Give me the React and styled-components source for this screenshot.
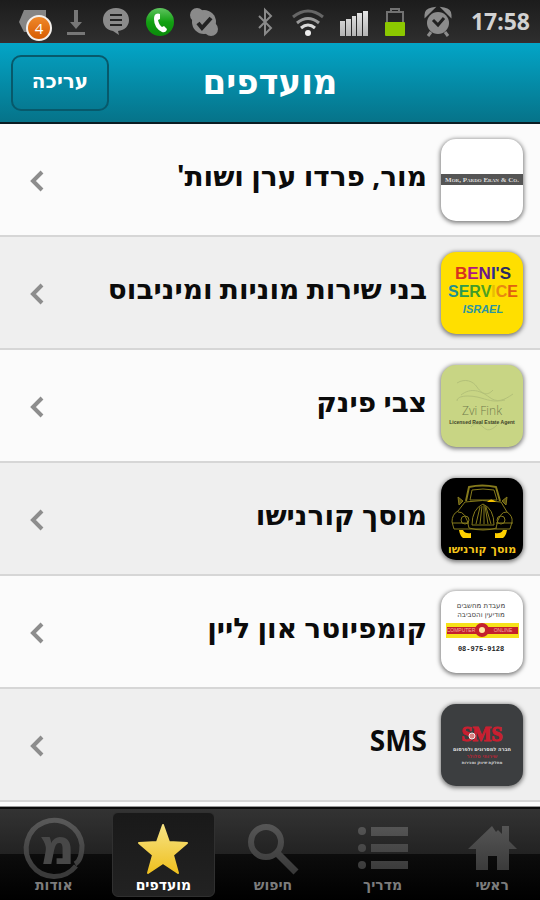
import React, { useState } from "react";
import styled, { createGlobalStyle } from "styled-components";

const rows = [
  { id: "mor", title: "מור, פרדו ערן ושות'", Logo: MorLogo, bg: "#ffffff" },
  { id: "beni", title: "בני שירות מוניות ומיניבוס", Logo: BeniLogo, bg: "#ffdf00" },
  { id: "zvi", title: "צבי פינק", Logo: ZviLogo, bg: "#c8d584" },
  { id: "garage", title: "מוסך קורנישו", Logo: GarageLogo, bg: "#000000" },
  { id: "online", title: "קומפיוטר און ליין", Logo: OnlineLogo, bg: "#ffffff" },
  { id: "sms", title: "SMS", Logo: SmsLogo, bg: "#3c3e40" },
];

const tabs = [
  { id: "home", title: "ראשי", Icon: HomeIcon },
  { id: "guide", title: "מדריך", Icon: ListIcon },
  { id: "search", title: "חיפוש", Icon: SearchIcon },
  { id: "favorites", title: "מועדפים", Icon: StarIcon },
  { id: "about", title: "אודות", Icon: AboutIcon },
];

function MorLogo() {
  return (
    <svg viewBox="0 0 82 82" direction="ltr">
      <rect y="35" width="82" height="11" fill="#555" />
      <text x="41" y="43" textAnchor="middle" fontSize="7" fontWeight="bold" fill="#ddd" fontFamily="Liberation Serif, serif" fontVariant="small-caps">
        Mor, Pardo Eran & Co.
      </text>
    </svg>
  );
}

function BeniLogo() {
  return (
    <svg viewBox="0 0 82 82" fontFamily="Liberation Sans, sans-serif" fontWeight="bold" textAnchor="middle">
      <text x="42" y="27" fontSize="17">
        <tspan fill="#d8341c">B</tspan>
        <tspan fill="#b01880">E</tspan>
        <tspan fill="#6a1a8c">N</tspan>
        <tspan fill="#2c2c90">I'</tspan>
        <tspan fill="#2a2a60">S</tspan>
      </text>
      <text x="42" y="45" fontSize="16">
        <tspan fill="#1f8f8f">S</tspan>
        <tspan fill="#2b9a50">E</tspan>
        <tspan fill="#3f9a28">R</tspan>
        <tspan fill="#4fa020">V</tspan>
        <tspan fill="#e8c000">I</tspan>
        <tspan fill="#e88a10">C</tspan>
        <tspan fill="#e06010">E</tspan>
      </text>
      <text x="42" y="61" fontSize="11" fontStyle="italic" fill="#2a95a0">
        ISRAEL
      </text>
    </svg>
  );
}

function ZviLogo() {
  return (
    <svg viewBox="0 0 82 82">
      <g fill="none" stroke="#b3c079" strokeWidth="1">
        <path d="M16 18c8-5 16-2 20 4s10 10 16 3" />
        <path d="M20 30c10-8 20-4 28 2s14 4 24-3" />
        <path d="M16 36c0-6 14-6 24-3s14 4 24 2" />
        <path d="M30 62c4-5 8-4 12 0s8 4 14-2" />
      </g>
      <text x="41" y="50" textAnchor="middle" fontSize="12" fill="#727c4c" fontFamily="Open Sans, sans-serif" fontWeight="300">
        Zvi Fink
      </text>
      <text x="41" y="59" textAnchor="middle" fontSize="5" fontWeight="bold" fill="#3c4228" fontFamily="Liberation Sans, sans-serif">
        Licensed Real Estate Agent
      </text>
    </svg>
  );
}

function GarageLogo() {
  return (
    <svg viewBox="0 0 82 82">
      <g fill="none" stroke="#857a1c" strokeWidth="1">
        <path d="M25 23l3-14q13-3 27 0l4 14" strokeWidth="2" />
        <path d="M29 22l2-10q11-2 22 0l3 10z" />
        <path d="M24 24q17-3 36 0l6 10q6 4 5 10l-2 7H13l-2-7q0-8 6-11z" />
        <path d="M31 47q0-16 11-21q11 5 11 21z" />
        <path d="M35 46l4-17M39 46l2-18M43 46V27M47 46l-3-18M50 46l-5-17" />
        <path d="M17 34q8-1 11 16M66 34q-8-1-11 16M11 45h17M55 45h17M28 50q14 4 28 0" />
        <circle cx="24" cy="42" r="4" />
        <circle cx="60" cy="42" r="4" />
        <path d="M17 19l5 4-4 4zM66 19l-5 4 4 4z" fill="#5a5010" />
      </g>
      <path d="M46 24q4-5 9 0z" fill="#f5c000" />
      <path d="M18 52h4q2 4 8 3v5h-8q-3-2-4-8zM66 52h-4q-2 4-8 3v5h8q3-2 4-8z" fill="#ffd000" />
      <text x="41" y="75" textAnchor="middle" fontSize="11" fontWeight="bold" fill="#f5c61a" fontFamily="DejaVu Sans, sans-serif">
        מוסך קורנישו
      </text>
    </svg>
  );
}

function OnlineLogo() {
  return (
    <svg viewBox="0 0 82 82" textAnchor="middle">
      <g fontFamily="DejaVu Sans, sans-serif" fontSize="7" fill="#444">
        <text x="40" y="17">מעבדת מחשבים</text>
        <text x="40" y="26">מודיעין והסביבה</text>
      </g>
      <rect x="5" y="32" width="73" height="15" fill="#f6e21a" />
      <rect x="6" y="36" width="71" height="7" fill="#c4202c" />
      <circle cx="41" cy="39" r="5" fill="#ffe9a0" stroke="#c4202c" strokeWidth="4" />
      <text x="20" y="41" fontSize="5" fill="#f3b0a0" fontFamily="Liberation Sans, sans-serif">COMPUTER</text>
      <text x="62" y="41" fontSize="5" fill="#f3b0a0" fontFamily="Liberation Sans, sans-serif">ONLINE</text>
      <text x="40" y="60" fontSize="7" fontWeight="bold" fill="#222" fontFamily="Liberation Mono, monospace">
        08-975-9128
      </text>
    </svg>
  );
}

function SmsLogo() {
  return (
    <svg viewBox="0 0 82 82" textAnchor="middle">
      <text x="41" y="37" fontSize="20" fontWeight="bold" fill="#c91f30" stroke="#c91f30" strokeWidth="1" fontFamily="Liberation Serif, serif">
        SMS
      </text>
      <circle cx="31" cy="32" r="3" fill="#d88080" stroke="#eee" strokeWidth="1" />
      <g fontFamily="DejaVu Sans, sans-serif" fontWeight="bold">
        <text x="41" y="47" fontSize="5" fill="#e4e4e4">חברה למסרונים ולפרסום</text>
        <text x="41" y="54" fontSize="5" fill="#b02838">שירותי סלולר</text>
        <text x="41" y="60" fontSize="4" fill="#cfcfcf">מחלקת שיווק ומכירות</text>
      </g>
    </svg>
  );
}

function HomeIcon() {
  return (
    <svg viewBox="0 0 64 64" fill="url(#tabGray)">
      <path d="M32 13L8 36h8v21h12V43h9v14h12V36h8L49 28V13h-7v8l-4-4-2 2z" />
    </svg>
  );
}

function ListIcon() {
  return (
    <svg viewBox="0 0 64 64" fill="url(#tabGray)">
      <circle cx="11" cy="18" r="4" />
      <circle cx="11" cy="35" r="4" />
      <circle cx="11" cy="52" r="4" />
      <path d="M20 14h37v9H20zM20 31h37v8H20zM20 48h37v8H20z" />
    </svg>
  );
}

function SearchIcon() {
  return (
    <svg viewBox="0 0 64 64" fill="none" stroke="url(#tabGray)">
      <circle cx="25" cy="29" r="15" strokeWidth="6" />
      <path d="M36 40l19 19" strokeWidth="7" />
    </svg>
  );
}

function StarIcon() {
  return (
    <svg viewBox="0 0 64 64">
      <path
        d="M32 12l6 17 18 1-14 12 5 18-15-10-15 10 5-18L8 30l18-1z"
        fill="url(#starGold)"
        stroke="url(#starGold)"
        strokeWidth="2"
        strokeLinejoin="round"
      />
    </svg>
  );
}

function AboutIcon() {
  return (
    <svg viewBox="0 0 64 64">
      <path d="M54 53A28 28 0 1 1 60 32q0 15-7 19" fill="none" stroke="url(#tabGray)" strokeWidth="5" />
      <text x="35" y="51" textAnchor="middle" fontSize="50" fontWeight="bold" fill="#484848" fontFamily="DejaVu Sans, sans-serif">
        מ
      </text>
    </svg>
  );
}

const Gradients = () => (
  <HiddenSvg aria-hidden="true">
    <linearGradient id="tabGray" gradientUnits="userSpaceOnUse" x1="0" y1="8" x2="0" y2="58">
      <stop offset="0" stopColor="#585858" />
      <stop offset="1" stopColor="#3a3a3a" />
    </linearGradient>
    <linearGradient id="starGold" x1="0" y1="0" x2="0" y2="1">
      <stop offset="0" stopColor="#f7e384" />
      <stop offset="1" stopColor="#efc01f" />
    </linearGradient>
    <linearGradient id="badgeOrange" x1="0" y1="0" x2="0" y2="1">
      <stop offset="0" stopColor="#f08a2c" />
      <stop offset="1" stopColor="#d65a00" />
    </linearGradient>
    <linearGradient id="callGreen" x1="0" y1="0" x2="0" y2="1">
      <stop offset="0" stopColor="#5fc45f" />
      <stop offset="0.5" stopColor="#12a012" />
      <stop offset="1" stopColor="#0a8a0a" />
    </linearGradient>
    <linearGradient id="signalGray" x1="0" y1="0" x2="0" y2="1">
      <stop offset="0" stopColor="#e6e6e6" />
      <stop offset="1" stopColor="#b4b4b4" />
    </linearGradient>
  </HiddenSvg>
);

const StatusIcons = () => (
  <>
    <StatusGroup>
      <svg width="34" height="36" viewBox="0 0 34 36">
        <path d="M8 7h22v14l-6 8H8L3 19z" fill="#858585" />
        <circle cx="23" cy="25" r="12" fill="url(#badgeOrange)" stroke="#f4f0ec" strokeWidth="2" />
        <text x="23" y="31" textAnchor="middle" fontSize="15" fill="#fff" fontFamily="Open Sans, sans-serif">
          4
        </text>
      </svg>
      <svg width="20" height="36" viewBox="0 0 20 36">
        <path d="M8 7h4v12h4l-6 7-6-7h4zM1 29h18v3H1z" fill="#777" />
      </svg>
      <svg width="28" height="36" viewBox="0 0 28 36">
        <path d="M14 5C6 5 1 10 1 17c0 6 4 10 10 11l6 4-1-4c7-1 11-5 11-11C27 10 22 5 14 5z" fill="#8a8a8a" />
        <path d="M8 12h12M8 17h12M8 22h12" stroke="#222" strokeWidth="2" />
      </svg>
      <svg width="28" height="36" viewBox="0 0 28 36">
        <circle cx="14" cy="19" r="14" fill="url(#callGreen)" />
        <path d="M10 11q2-1 4 0l0 5-2 1q1 5 4 7l2-1 3 3q-1 4-5 3Q8 25 8 16q0-4 2-5z" fill="#fff" />
      </svg>
      <svg width="28" height="36" viewBox="1 0 28 36">
        <circle cx="15" cy="19" r="12" fill="#8a8a8a" />
        <circle cx="8" cy="12" r="7" fill="#8a8a8a" />
        <circle cx="22" cy="26" r="7" fill="#8a8a8a" />
        <path d="M9 20l4 5 9-10" fill="none" stroke="#222" strokeWidth="4" />
      </svg>
    </StatusGroup>
    <StatusGroup>
      <svg width="16" height="36" viewBox="0 0 16 36">
        <path d="M2 13l12 12-6 6V7l6 6L2 25" fill="none" stroke="#8a8a8a" strokeWidth="2" />
      </svg>
      <svg width="32" height="36" viewBox="-1 0 32 36">
        <g fill="none" strokeWidth="3">
          <path d="M1 14q15-12 30 0" stroke="#666" />
          <path d="M5 20q11-9 22 0" stroke="#999" />
          <path d="M9 25q7-6 14 0" stroke="#d8d8d8" />
        </g>
        <circle cx="16" cy="30" r="3" fill="#eee" />
      </svg>
      <svg width="28" height="36" viewBox="1 0 28 36">
        <path d="M0 18h5v15H0zM6 16h5v17H6zM12 13h4v20h-4zM17 10h5v23h-5zM23 8h5v25h-5z" fill="url(#signalGray)" />
      </svg>
      <svg width="20" height="36" viewBox="2 0 20 36">
        <path d="M6 8V6h8v2M2 32V9h16v23z" fill="none" stroke="#727272" strokeWidth="2" />
        <rect y="19" width="20" height="14" rx="1" fill="#8cc800" />
      </svg>
      <svg width="28" height="36" viewBox="1 0 28 36">
        <circle cx="14" cy="20" r="11" fill="#8c8c8c" />
        <path d="M2 12q0-5 6-6zM26 12q0-5-6-6zM7 29l-3 4M21 29l3 4" fill="#8c8c8c" stroke="#8c8c8c" strokeWidth="3" />
        <path d="M9 17l5 5 6-7" fill="none" stroke="#222" strokeWidth="3" />
      </svg>
      <Clock>17:58</Clock>
    </StatusGroup>
  </>
);

const App = () => {
  const [activeTab, setActiveTab] = useState("favorites");

  return (
    <>
      <GlobalStyle />
      <Gradients />
      <Screen dir="rtl" lang="he">
        <StatusBar dir="ltr">
          <StatusIcons />
        </StatusBar>

        <Header dir="ltr">
          <EditButton type="button">עריכה</EditButton>
          <Title>מועדפים</Title>
        </Header>

        <List>
          {rows.map(({ id, title, Logo, bg }) => (
            <Row key={id}>
              <RowLink href={`#${id}`}>
                <Tile $bg={bg}>
                  <Logo />
                </Tile>
                <RowTitle>{title}</RowTitle>
                <Chevron viewBox="0 0 14 22" aria-hidden="true">
                  <path d="M12 3L3 12l9 9" />
                </Chevron>
              </RowLink>
            </Row>
          ))}
        </List>

        <TabBar>
          {tabs.map(({ id, title, Icon }) => (
            <Tab
              key={id}
              href={`#${id}`}
              $active={id === activeTab}
              onClick={() => setActiveTab(id)}
            >
              <Icon />
              <span>{title}</span>
            </Tab>
          ))}
        </TabBar>
      </Screen>
    </>
  );
};

export default App;

const GlobalStyle = createGlobalStyle`
  * {
    box-sizing: border-box;
  }
  body {
    margin: 0;
    background: #fbfbfb;
    font-family: "Noto Sans", "DejaVu Sans", sans-serif;
  }
`;

const HiddenSvg = styled.svg`
  position: absolute;
  width: 0;
  height: 0;
`;

const Screen = styled.div`
  min-height: 100vh;
  display: flex;
  flex-direction: column;
`;

const StatusBar = styled.div`
  height: 43px;
  padding: 0 10px 0 16px;
  display: flex;
  align-items: center;
  justify-content: space-between;
  background: linear-gradient(#1c1c1c, #2e2e2e);
  border-bottom: 1px solid #3a2a2c;
`;

const StatusGroup = styled.div`
  display: flex;
  align-items: center;
  gap: 16px;

  svg {
    overflow: visible;
  }

  & + & {
    gap: 18px;
  }
`;

const Clock = styled.time`
  color: #d2d2d2;
  font-size: 23px;
  line-height: 36px;
  font-weight: 700;
`;

const Header = styled.header`
  height: 81px;
  padding: 0 11px;
  display: grid;
  grid-template-columns: 1fr auto 1fr;
  align-items: center;
  background: linear-gradient(#03a5c7, #067389);
  border-bottom: 2px solid #0a1c22;
`;

const EditButton = styled.button`
  width: 98px;
  height: 56px;
  padding: 0 0 4px;
  border: 2px solid #07596b;
  border-radius: 10px;
  background: linear-gradient(#0599b8, #067a92);
  color: #fff;
  font-family: inherit;
  font-size: 20px;
  font-weight: 700;
  cursor: pointer;
`;

const Title = styled.h1`
  margin: 0;
  padding-bottom: 4px;
  color: #fff;
  font-size: 34px;
  line-height: 44px;
  font-weight: 700;
`;

const List = styled.ul`
  flex: 1;
  margin: 0;
  padding: 0;
  list-style: none;
`;

const Row = styled.li`
  border-bottom: 2px solid #d6d6d6;
  background: #fbfbfb;

  &:nth-child(even) {
    background: #efefef;
  }
`;

const RowLink = styled.a`
  min-height: 111px;
  padding: 0 17px 0 30px;
  display: flex;
  align-items: center;
  gap: 14px;
  color: #0b0b0b;
  text-decoration: none;
`;

const Tile = styled.span`
  flex: none;
  width: 82px;
  height: 82px;
  overflow: hidden;
  border-radius: 15px;
  background: ${(props) => props.$bg};
  box-shadow: 0 1px 4px 1px rgba(0, 0, 0, 0.5);

  svg {
    display: block;
  }
`;

const RowTitle = styled.span`
  flex: 1;
  padding-bottom: 10px;
  font-size: 28px;
  line-height: 36px;
  font-weight: 700;
`;

const Chevron = styled.svg`
  flex: none;
  width: 14px;
  height: 22px;
  overflow: visible;
  fill: none;
  stroke: #8d8d8d;
  stroke-width: 4px;
`;

const TabBar = styled.nav`
  height: 93px;
  padding: 3px 0 3px 6px;
  display: grid;
  grid-template-columns: repeat(5, 1fr);
  gap: 14px;
  overflow: hidden;
  background: linear-gradient(#333 0, #222 50%, #0c0c0c 50%, #000 100%);
  border-top: 2px solid #0a0a0a;
  box-shadow: 0 -1px 0 #999;
`;

const Tab = styled.a`
  margin: 0 ${(props) => (props.$active ? "-4px" : "0")};
  display: flex;
  flex-direction: column;
  align-items: center;
  border: 1px solid ${(props) => (props.$active ? "#303030" : "transparent")};
  border-radius: 6px;
  background: ${(props) => (props.$active ? "linear-gradient(#191919, #222)" : "none")};
  color: ${(props) => (props.$active ? "#fff" : "#7c7c7c")};
  font-size: 14px;
  line-height: 16px;
  font-weight: 700;
  text-decoration: none;

  svg {
    width: 64px;
    height: 64px;
    overflow: visible;
  }
`;
